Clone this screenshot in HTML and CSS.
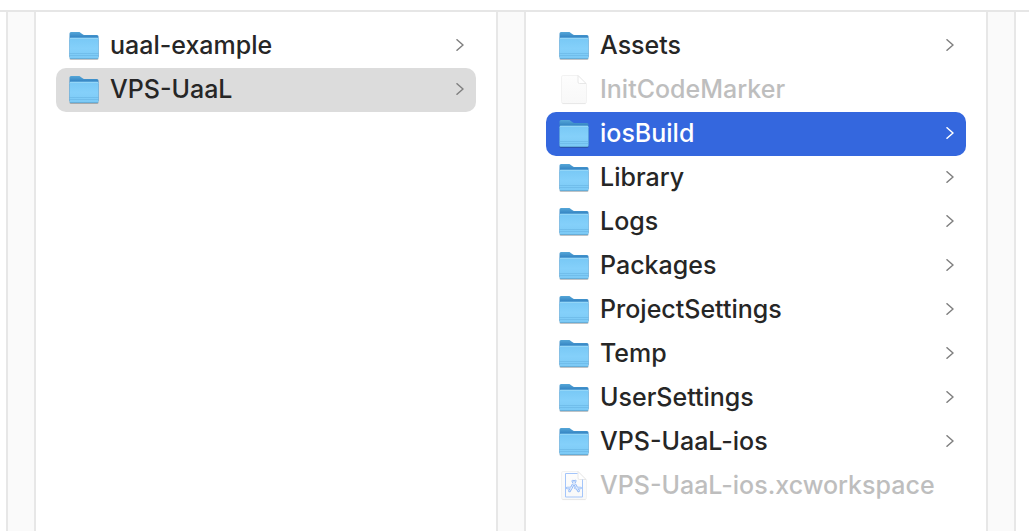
FILE: index.html
```html
<!DOCTYPE html>
<html lang="en">
<head>
<meta charset="utf-8">
<meta name="viewport" content="width=device-width, initial-scale=1">
<title>VPS-UaaL</title>
<link rel="stylesheet" href="styles.css">
</head>
<body>
<svg class="sprite" aria-hidden="true">
  <defs>
    <linearGradient id="back" x1="0" y1="0" x2="0" y2="1">
      <stop offset="0" stop-color="#55a7d8"/>
      <stop offset=".25" stop-color="#307fc0"/>
      <stop offset="1" stop-color="#307fc0"/>
    </linearGradient>
    <linearGradient id="front" x1="0" y1="0" x2="0" y2="1">
      <stop offset="0" stop-color="#78c8f5"/>
      <stop offset=".5" stop-color="#84d0fa"/>
      <stop offset="1" stop-color="#7bc9f5"/>
    </linearGradient>
    <linearGradient id="paper" x1="0" y1="0" x2="0" y2="1">
      <stop offset="0" stop-color="#fdfdfd"/>
      <stop offset="1" stop-color="#f8f8f8"/>
    </linearGradient>
  </defs>
  <symbol id="folder" viewBox="0 0 32 32">
    <path d="M1.500 10h29v18.500q0 1.500-1.500 1.500H3q-1.500 0-1.500-1.500z" fill="#000" opacity=".22"/>
    <path d="M1.500 27V3.500q0-1.500 1.500-1.500h7.500c1.500 0 2 .6 3 1.500s1.800 1.500 3.500 1.500h12q1.500 0 1.500 1.500V27z" fill="url(#back)"/>
    <path d="M1.500 9.200q0-1.400 1.500-1.400h26q1.500 0 1.500 1.400v18.300q0 1.500-1.500 1.500H3q-1.500 0-1.500-1.500z" fill="url(#front)"/>
    <path d="M2 8.300h28" stroke="#a2def9" stroke-width=".8"/>
    <path d="M1.500 23.500h29M1.500 25.500h29" stroke="#62afdf" stroke-width=".5"/>
    <path d="M2 28.600h28" stroke="#5a9fc8" stroke-width=".7"/>
  </symbol>
  <symbol id="document" viewBox="0 0 32 32">
    <path d="M3.500 3.200q0-1.700 1.700-1.700h14.800l8.500 8.500v17.700q0 1.800-1.800 1.800H5.300q-1.800 0-1.800-1.800z" fill="url(#paper)" stroke="#f0f0f0" stroke-width=".9"/>
    <path d="M4.500 29.600h23" stroke="#e2e2e2" stroke-width=".8"/>
    <path d="M20 1.500V8q0 1.500 1.500 1.500H28z" fill="#fff" stroke="#e2e2e2" stroke-width=".8"/>
  </symbol>
  <symbol id="workspace" viewBox="0 0 32 32">
    <use href="#document"/>
    <path d="M19.500 3.500H7.500v23.500h17V9.500" fill="none" stroke="#a4c5fa" stroke-width="1"/>
    <g fill="none" stroke-linecap="round">
      <path d="M14.800 11l5.800 10M17.200 11l-5.700 10M9.300 18h4M17.500 18h5" stroke="#91b9f8" stroke-width="2.600"/>
      <path d="M14.800 11l5.800 10M17.200 11l-5.700 10M9.300 18h4M17.500 18h5" stroke="#e7f0fd" stroke-width="1"/>
    </g>
  </symbol>
  <symbol id="chevron" viewBox="0 0 8 12">
    <path d="M1 .700l6 5.300-6 5.300" fill="none" stroke="currentColor" stroke-width="1.500" stroke-linecap="round" stroke-linejoin="round"/>
  </symbol>
</svg>
<main class="browser">
  <div class="gutter"></div>
  <ul class="column" aria-label="Projects">
    <li><button class="row"><svg class="icon"><use href="#folder"/></svg><span class="name">uaal-example</span><svg class="chevron"><use href="#chevron"/></svg></button></li>
    <li><button class="row open"><svg class="icon"><use href="#folder"/></svg><span class="name">VPS-UaaL</span><svg class="chevron"><use href="#chevron"/></svg></button></li>
  </ul>
  <div class="gutter"></div>
  <ul class="column" aria-label="VPS-UaaL">
    <li><button class="row"><svg class="icon"><use href="#folder"/></svg><span class="name">Assets</span><svg class="chevron"><use href="#chevron"/></svg></button></li>
    <li><button class="row" disabled><svg class="icon"><use href="#document"/></svg><span class="name">InitCodeMarker</span></button></li>
    <li><button class="row selected"><svg class="icon"><use href="#folder"/></svg><span class="name">iosBuild</span><svg class="chevron"><use href="#chevron"/></svg></button></li>
    <li><button class="row"><svg class="icon"><use href="#folder"/></svg><span class="name">Library</span><svg class="chevron"><use href="#chevron"/></svg></button></li>
    <li><button class="row"><svg class="icon"><use href="#folder"/></svg><span class="name">Logs</span><svg class="chevron"><use href="#chevron"/></svg></button></li>
    <li><button class="row"><svg class="icon"><use href="#folder"/></svg><span class="name">Packages</span><svg class="chevron"><use href="#chevron"/></svg></button></li>
    <li><button class="row"><svg class="icon"><use href="#folder"/></svg><span class="name">ProjectSettings</span><svg class="chevron"><use href="#chevron"/></svg></button></li>
    <li><button class="row"><svg class="icon"><use href="#folder"/></svg><span class="name">Temp</span><svg class="chevron"><use href="#chevron"/></svg></button></li>
    <li><button class="row"><svg class="icon"><use href="#folder"/></svg><span class="name">UserSettings</span><svg class="chevron"><use href="#chevron"/></svg></button></li>
    <li><button class="row"><svg class="icon"><use href="#folder"/></svg><span class="name">VPS-UaaL-ios</span><svg class="chevron"><use href="#chevron"/></svg></button></li>
    <li><button class="row" disabled><svg class="icon"><use href="#workspace"/></svg><span class="name">VPS-UaaL-ios.xcworkspace</span></button></li>
  </ul>
  <div class="gutter"></div>
</main>
</body>
</html>
```
FILE: styles.css
```css
* {
  box-sizing: border-box;
}

body {
  min-height: 100vh;
  margin: 0;
  padding-top: 10px;
  display: flex;
  flex-direction: column;
  background: #fff;
  font-family: Inter, "Liberation Sans", sans-serif;
}

.sprite {
  position: absolute;
  width: 0;
  height: 0;
}

.browser {
  flex: 1;
  display: grid;
  grid-template-columns: 30px 1fr 30px 1fr 30px;
  padding: 0 13px 0 6px;
  border-top: 2px solid #e6e6e6;
}

.gutter {
  background: #fafafa;
  border: solid #e7e7e7;
  border-width: 0 2px;
}

.column {
  min-width: 0;
  margin: 0;
  padding: 12px 20px 0;
  list-style: none;
}

.row {
  display: flex;
  align-items: center;
  gap: 10px;
  width: 100%;
  height: 44px;
  padding: 0 12px;
  border: 0;
  border-radius: 10px;
  background: none;
  color: #262626;
  font: inherit;
  font-size: 25px;
  font-weight: 450;
  line-height: 32px;
  text-align: left;
}

.row:disabled {
  color: #bebebe;
}

.row.open {
  background: #dcdcdc;
}

.row.selected {
  background: #3467de;
  color: #fff;
}

.icon {
  flex: none;
  width: 32px;
  height: 32px;
}

.name {
  flex: 1;
  min-width: 0;
  padding-bottom: 2px;
  white-space: nowrap;
}

.chevron {
  flex: none;
  width: 8px;
  height: 12px;
  margin-bottom: 2px;
  color: #808080;
}

.selected .chevron {
  color: #fff;
}
```
